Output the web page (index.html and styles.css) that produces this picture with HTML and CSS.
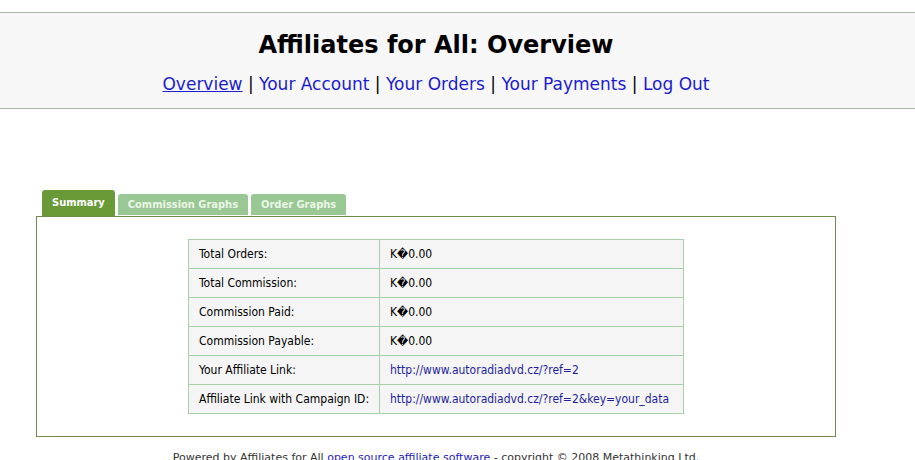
FILE: index.html
```html
<!DOCTYPE html>
<html lang="en">
<head>
    <meta charset="UTF-8">
    <title>Affiliates for All: Overview</title>
    <link rel="stylesheet" href="styles.css">
</head>
<body>
    <div class="header">
        <div class="header-inner">
            <h1>Affiliates for All: Overview</h1>
            <div class="nav">
                <a href="#" class="current">Overview</a> |
                <a href="#">Your Account</a> |
                <a href="#">Your Orders</a> |
                <a href="#">Your Payments</a> |
                <a href="#">Log Out</a>
            </div>
        </div>
    </div>

    <div class="page">
        <ul class="tabs">
            <li class="tab active">Summary</li>
            <li class="tab">Commission Graphs</li>
            <li class="tab">Order Graphs</li>
        </ul>
        <div class="panel">
            <table class="summary">
                <tr><td class="label">Total Orders:</td><td>K&#xFFFD;0.00</td></tr>
                <tr><td class="label">Total Commission:</td><td>K&#xFFFD;0.00</td></tr>
                <tr><td class="label">Commission Paid:</td><td>K&#xFFFD;0.00</td></tr>
                <tr><td class="label">Commission Payable:</td><td>K&#xFFFD;0.00</td></tr>
                <tr><td class="label">Your Affiliate Link:</td><td><a href="#">http://www.autoradiadvd.cz/?ref=2</a></td></tr>
                <tr><td class="label">Affiliate Link with Campaign ID:</td><td><a href="#">http://www.autoradiadvd.cz/?ref=2&amp;key=your_data</a></td></tr>
            </table>
        </div>
        <p class="footer">Powered by Affiliates for All <a href="#">open source affiliate software</a> - copyright &copy; 2008 Metathinking Ltd.</p>
    </div>
</body>
</html>
```

FILE: styles.css
```css
body {
    margin: 0;
    font-family: "DejaVu Sans", Verdana, sans-serif;
    background: #fff;
    color: #000;
}
.header {
    margin-top: 12px;
    height: 95px;
    background-color: #f7f7f7;
    border-top: 1px solid #a9baa9;
    border-bottom: 1px solid #a9baa9;
}
.header-inner {
    width: 872px;
    text-align: center;
}
h1 {
    margin: 0;
    padding-top: 17px;
    font-size: 24px;
    line-height: 30px;
}
.nav {
    margin-top: 12px;
    font-size: 17px;
    line-height: 24px;
    color: #000;
}
.nav a {
    color: #1c1ccf;
    text-decoration: none;
}
.nav a.current {
    text-decoration: underline;
}
.page {
    width: 800px;
    margin-left: 36px;
    padding-top: 81px;
}
.tabs {
    display: flex;
    align-items: flex-end;
    list-style: none;
    margin: 0;
    padding: 0 0 0 6px;
    gap: 3px;
}
.tab {
    font-family: "DejaVu Sans Condensed", "DejaVu Sans", sans-serif;
    font-size: 11px;
    font-weight: bold;
    color: #eaf6e6;
    background-color: #99c894;
    height: 21px;
    line-height: 22px;
    padding: 0 10px;
    margin-bottom: 1px;
    border-radius: 3px 3px 0 0;
}
.tab.active {
    background-color: #6a9a38;
    color: #fff;
    height: 26px;
    line-height: 25px;
    margin-bottom: 0;
}
.panel {
    border: 1px solid #6f8a4c;
    padding: 22px 0;
    height: 175px;
}
.summary {
    width: 496px;
    margin: 0 auto;
    border-collapse: collapse;
    background-color: #f5f5f5;
    font-family: "DejaVu Sans Condensed", "DejaVu Sans", sans-serif;
    font-size: 12px;
}
.summary td {
    border: 1px solid #a9d1a9;
    height: 28px;
    padding: 0 10px;
    white-space: nowrap;
}
.summary td.label {
    width: 168px;
}
.summary a {
    color: #1e1e9e;
    text-decoration: none;
}
.footer {
    margin: 14px 0 0;
    font-size: 11px;
    text-align: center;
    color: #333;
}
.footer a {
    color: #2222bb;
}
```
